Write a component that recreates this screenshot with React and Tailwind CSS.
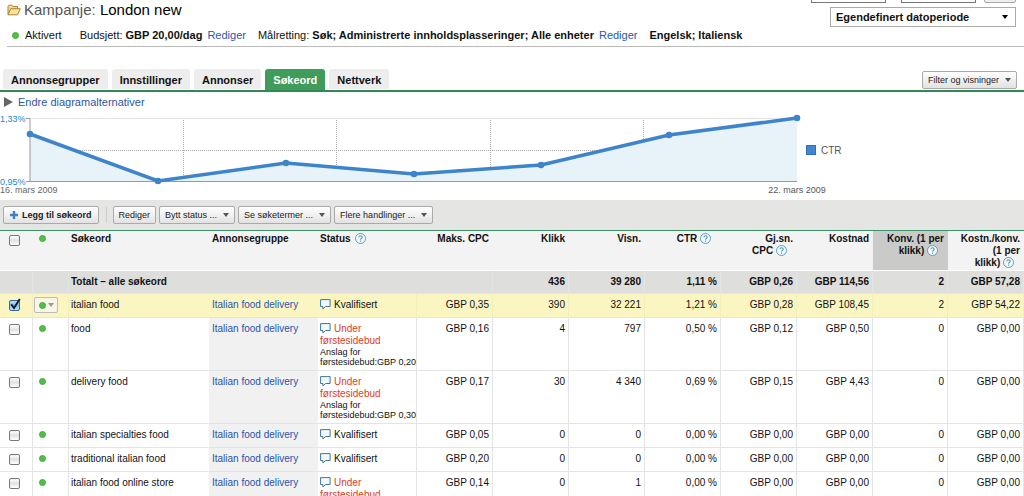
const tabs = ["Annonsegrupper", "Innstillinger", "Annonser", "Søkeord", "Nettverk"];

const points = [
  [30, 24],
  [158, 71],
  [286, 53],
  [414, 64],
  [541, 55],
  [669, 25],
  [797, 8],
];

const rows = [
  { keyword: "italian food", selected: true, cpc: "0,35", clicks: "390", impr: "32 221", ctr: "1,21", avg: "0,28", cost: "108,45", conv: "2", perConv: "54,22" },
  { keyword: "food", bid: "0,20", cpc: "0,16", clicks: "4", impr: "797", ctr: "0,50", avg: "0,12", cost: "0,50", conv: "0", perConv: "0,00" },
  { keyword: "delivery food", bid: "0,30", cpc: "0,17", clicks: "30", impr: "4 340", ctr: "0,69", avg: "0,15", cost: "4,43", conv: "0", perConv: "0,00" },
  { keyword: "italian specialties food", cpc: "0,05", clicks: "0", impr: "0", ctr: "0,00", avg: "0,00", cost: "0,00", conv: "0", perConv: "0,00" },
  { keyword: "traditional italian food", cpc: "0,20", clicks: "0", impr: "0", ctr: "0,00", avg: "0,00", cost: "0,00", conv: "0", perConv: "0,00" },
  { keyword: "italian food online store", bid: "0,20", cpc: "0,14", clicks: "0", impr: "1", ctr: "0,00", avg: "0,00", cost: "0,00", conv: "0", perConv: "0,00" },
];

function Dot() {
  return <span className="inline-block size-[7px] rounded-full bg-[#4fc044] border border-[#45ad3c]" />;
}

function Caret({ className }) {
  return (
    <svg viewBox="0 0 6 4" className={`w-[6px] h-[4px] ${className || ""}`} fill="currentColor">
      <path d="M0 0h6L3 4z" />
    </svg>
  );
}

function Folder() {
  return (
    <svg viewBox="0 0 14 12" className="w-[14px] h-[12px]">
      <path d="M1 10.5V2.2L2 1.2h3l1 1.3h4.5v2" fill="#f6d98a" stroke="#a8843a" />
      <path d="M1 10.8 3.8 4.7h9.4L10.6 10.8z" fill="#fbe39a" stroke="#a8843a" strokeLinejoin="round" />
    </svg>
  );
}

function Help({ className }) {
  return (
    <svg viewBox="0 0 11 11" className={`inline-block size-[11px] align-[-2px] ${className || ""}`} fill="none" stroke="#4b96bd">
      <circle cx="5.5" cy="5.5" r="5" fill="#f4fafd" strokeWidth="0.9" />
      <path d="M3.9 4.3c0-2.2 3.3-2.1 3.3-.1 0 1.2-1.6 1.2-1.6 2.5M5.6 7.6v1.1" strokeWidth="1.1" />
    </svg>
  );
}

function Bubble() {
  return (
    <svg viewBox="0 0 11 11" className="inline-block size-[11px] align-[-2px] mr-[3px]">
      <path d="M.6.6h9.500v6.900H5.600L2.900 10V7.500H.6z" fill="#f2f9fd" stroke="#40759c" />
    </svg>
  );
}

function Button({ children, menu, className }) {
  return (
    <button
      type="button"
      className={`flex items-center h-[18px] text-[9px] leading-none text-[#222] whitespace-nowrap border border-[#aaa] rounded-[2px] bg-linear-to-b from-white to-[#e2e2e2] ${className || "px-[5px]"}`}
    >
      {children}
      {menu && <Caret className="ml-[6px] text-[#555]" />}
    </button>
  );
}

function Check({ label, checked }) {
  return (
    <span className="relative block size-[11px] ml-[9px]">
      <input
        type="checkbox"
        aria-label={label}
        defaultChecked={checked}
        className="peer block appearance-none size-[11px] border border-[#777] rounded-[2px] bg-linear-to-b from-white via-[#e2e2e2] to-white checked:border-[#3b6690] checked:from-[#b9d9f5] checked:via-[#8cc0ee] checked:to-[#b9e2fb]"
      />
      <svg viewBox="0 0 12 13" className="hidden peer-checked:block absolute left-0 -top-[2px] w-[12px] h-[13px] pointer-events-none">
        <path d="M2.3 6.2 5 10 10.8 1" fill="none" stroke="#0b1a2c" strokeWidth="1.9" />
      </svg>
    </span>
  );
}

function DatePicker() {
  return (
    <div className="flex flex-col items-end shrink-0 mr-2">
      <div className="flex -mt-[17px] h-5">
        <input aria-label="Fra dato" className="w-[75px] h-5 border border-[#777] bg-white" />
        <input aria-label="Til dato" className="w-[75px] h-5 ml-[15px] border border-[#777] bg-white" />
        <button type="button" aria-label="Bruk" className="w-8 h-5 ml-2 border border-[#aaa] rounded-[2px] bg-[#eee]" />
      </div>
      <div className="relative mt-1">
        <select
          aria-label="Datoperiode"
          className="block appearance-none w-[186px] h-5 pl-[5px] text-[11px] font-bold text-[#111] border border-[#aaa] bg-white"
        >
          <option>Egendefinert datoperiode</option>
        </select>
        <Caret className="absolute right-2 top-2 text-black" />
      </div>
    </div>
  );
}

function Header() {
  return (
    <header className="flex justify-between ml-[7px] h-[47px] border-b border-[#bbb]">
      <div>
        <h1 className="flex items-center h-5 text-[15px] text-black whitespace-pre">
          <Folder />
          <span className="ml-[3px] text-[#555]">Kampanje: </span>London new
        </h1>
        <div className="flex items-center mt-2 h-[14px] ml-[5px] text-[11px] whitespace-nowrap">
          <Dot />
          <span className="ml-[6px]">Aktivert</span>
          <span className="ml-[18px]">Budsjett: <b>GBP 20,00/dag</b></span>
          <a href="#budget" className="ml-[5px] text-[#2b56b0]">Rediger</a>
          <span className="ml-3">Målretting: <b>Søk; Administrerte innholdsplasseringer; Alle enheter</b></span>
          <a href="#targeting" className="ml-[5px] text-[#2b56b0]">Rediger</a>
          <b className="ml-3">Engelsk; Italiensk</b>
        </div>
      </div>
      <DatePicker />
    </header>
  );
}

function Tabs() {
  return (
    <nav className="flex items-end mt-[22px] pl-[3px] pr-[7px] border-b-2 border-[#2f8a55]">
      <div className="flex gap-1">
        {tabs.map((tab) => (
          <a
            key={tab}
            href={`#${tab}`}
            className={`h-[21px] px-2 rounded-t-[3px] text-[11px] leading-[22px] font-bold ${
              tab === "Søkeord" ? "bg-[#3f9c5a] text-white" : "bg-[#ededed] text-[#111] border-b border-white"
            }`}
          >
            {tab}
          </a>
        ))}
      </div>
      <Button menu className="ml-auto mb-px px-[5px]">Filter og visninger</Button>
    </nav>
  );
}

function Chart() {
  const line = points.map((p) => p.join(",")).join(" ");
  return (
    <section>
      <a href="#chart" className="flex items-center h-[18px] pt-[3px] pl-1 text-[11px] text-[#2d55a5]">
        <svg viewBox="0 0 9 10" className="w-[9px] h-[10px] mr-[5px] mb-[2px]" fill="#666">
          <path d="M0 0l9 5-9 5z" />
        </svg>
        Endre diagramalternativer
      </a>
      <div className="flex">
        <svg viewBox="0 0 806 90" className="w-[806px] h-[90px] shrink-0 overflow-visible text-[9px]">
          <path d="M30 8.500H797" stroke="#e4e4e4" />
          <path d="M30 40.500H797M183.500 10V71M336.500 10V71M490.500 10V71M643.500 10V71" stroke="#aaa" strokeDasharray="1 1" />
          <polygon points={`30,71 ${line} 797,71`} fill="#e7f2f9" />
          <path d="M26 8.500h4V71.500M26 71.500H797" fill="none" stroke="#999" />
          <polyline points={line} fill="none" stroke="#3d84cb" strokeWidth="3.500" />
          {points.map(([x, y]) => (
            <circle key={x} cx={x} cy={y} r="3.300" fill="#3d84cb" />
          ))}
          <text x="0" y="12" fill="#2a86cc">1,33%</text>
          <text x="0" y="75" fill="#2a86cc">0,95%</text>
          <text x="0" y="83" fill="#666">16. mars 2009</text>
          <text x="797" y="83" fill="#555" textAnchor="middle">22. mars 2009</text>
        </svg>
        <div className="flex items-center h-3 mt-[34px] text-[10px] text-[#555]">
          <span className="size-[10px] mr-[5px] bg-[#4285d0] border border-[#336fb8]" />
          CTR
        </div>
      </div>
    </section>
  );
}

function Toolbar() {
  return (
    <div className="flex items-center gap-[3px] h-[30px] pl-[3px] bg-[#e5e5e4]">
      <Button className="px-[6px] font-bold">
        <svg viewBox="0 0 8 8" className="size-[8px] mr-[4px]" stroke="#3f7fc0" strokeWidth="2.400">
          <path d="M4 0v8M0 4h8" />
        </svg>
        Legg til søkeord
      </Button>
      <span className="w-px h-4 ml-1 mr-[3px] bg-[#ccc]" />
      <Button>Rediger</Button>
      <Button menu>Bytt status ...</Button>
      <Button menu>Se søketermer ...</Button>
      <Button menu>Flere handlinger ...</Button>
    </div>
  );
}

function Status({ bid }) {
  if (!bid) {
    return <><Bubble />Kvalifisert</>;
  }
  return (
    <>
      <div className="text-[#e23a26]"><Bubble />Under<br />førstesidebud</div>
      <div className="text-[9px] leading-[10px] whitespace-nowrap">Anslag for<br />førstesidebud:GBP {bid}</div>
    </>
  );
}

function Num({ children }) {
  return <td className="pt-[5px] pr-[3px] text-right whitespace-nowrap">{children}</td>;
}

function KeywordTable() {
  return (
    <table className="w-full table-fixed border-separate border-spacing-0 border-t border-[#3d9468] text-[10px] leading-3 text-[#111]">
      <colgroup>
        <col className="w-[33px]" />
        <col className="w-[36px]" />
        <col />
        <col className="w-[109px]" />
        <col className="w-[99px]" />
        <col className="w-[76px]" />
        <col className="w-[76px]" />
        <col className="w-[76px]" />
        <col className="w-[76px]" />
        <col className="w-[76px]" />
        <col className="w-[76px]" />
        <col className="w-[75px]" />
        <col className="w-[76px]" />
      </colgroup>
      <thead className="bg-[#f3f3f3] text-right [&_th]:align-top [&_th]:pt-[2px] [&_th]:pr-1 [&_th]:border-b [&_th]:border-white">
        <tr className="h-10">
          <th><div className="pt-[2px]"><Check label="Velg alle" /></div></th>
          <th className="text-left pl-[6px]"><Dot /></th>
          <th className="text-left pl-[2px]">Søkeord</th>
          <th className="text-left pl-[3px]">Annonsegruppe</th>
          <th className="text-left pl-[2px]">Status <Help className="ml-[2px]" /></th>
          <th>Maks. CPC</th>
          <th>Klikk</th>
          <th>Visn.</th>
          <th>CTR <Help className="mr-[6px]" /></th>
          <th>Gj.sn.<br />CPC <Help className="mr-[6px]" /></th>
          <th>Kostnad</th>
          <th className="bg-[#cacac8] whitespace-nowrap">Konv. (1 per<br />klikk) <Help className="mr-[6px]" /></th>
          <th className="whitespace-nowrap">Kostn./konv.<br />(1 per<br />klikk) <Help className="mr-[6px]" /></th>
        </tr>
      </thead>
      <tbody className="[&_td]:align-top [&_td]:border-b [&_td]:border-r [&_td]:border-[#e4e4e4]">
        <tr className="h-[23px] bg-[#dededd] font-bold [&_td]:border-[#cfcfcf]">
          <td />
          <td />
          <td colSpan={4} className="pt-[5px] pl-[2px]">Totalt – alle søkeord</td>
          <Num>436</Num>
          <Num>39 280</Num>
          <Num>1,11 %</Num>
          <Num>GBP 0,26</Num>
          <Num>GBP 114,56</Num>
          <Num>2</Num>
          <Num>GBP 57,28</Num>
        </tr>
        {rows.map((row) => (
          <tr key={row.keyword} className={`h-6 ${row.selected ? "bg-[#fbf5c2] [&_td]:border-r-[#f4eebb]" : "bg-white"}`}>
            <td className="pt-[6px]"><Check label={row.keyword} checked={row.selected} /></td>
            {row.selected ? (
              <td className="pl-[1px] pt-[3px]">
                <button type="button" aria-label="Endre status" className="flex items-center gap-[2px] w-6 h-4 pl-1 border border-[#bbb] rounded-[2px] bg-[#f8f6e6]">
                  <Dot />
                  <Caret className="text-[#999]" />
                </button>
              </td>
            ) : (
              <td className="pt-[5px] pl-[6px]"><Dot /></td>
            )}
            <td className="pt-[5px] pl-[2px] border-r-transparent!">{row.keyword}</td>
            <td className={`pt-[5px] pl-[3px] border-r-transparent! ${row.selected ? "" : "bg-[#f1f1f1]"}`}>
              <a href="#group" className="text-[#2b52ab]">Italian food delivery</a>
            </td>
            <td className="pt-[5px] pl-[2px] pb-[3px]"><Status bid={row.bid} /></td>
            <Num>GBP {row.cpc}</Num>
            <Num>{row.clicks}</Num>
            <Num>{row.impr}</Num>
            <Num>{row.ctr} %</Num>
            <Num>GBP {row.avg}</Num>
            <Num>GBP {row.cost}</Num>
            <Num>{row.conv}</Num>
            <Num>GBP {row.perConv}</Num>
          </tr>
        ))}
      </tbody>
    </table>
  );
}

export default function App() {
  return (
    <div className="h-screen overflow-hidden bg-white text-[#111] font-['Liberation_Sans',Arial,sans-serif]">
      <Header />
      <Tabs />
      <Chart />
      <Toolbar />
      <KeywordTable />
    </div>
  );
}
